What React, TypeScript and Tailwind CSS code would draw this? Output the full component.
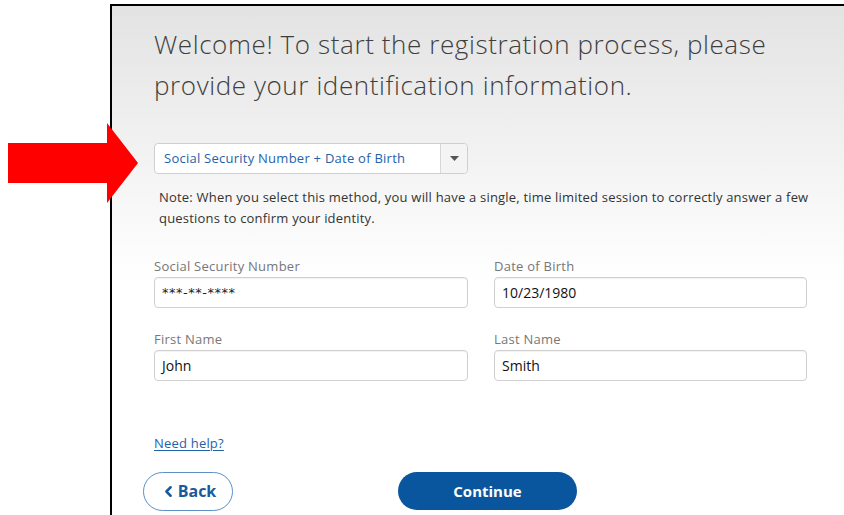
import React from 'react';
import { ChevronLeft } from 'lucide-react';

const Field = ({ label, value, mono }: { label: string; value: string; mono?: boolean }) => (
  <div className="flex flex-col">
    <label className="text-[13px] leading-[16px] tracking-[0.25px] text-[#777] mb-[3px]">{label}</label>
    <div className="h-[31px] rounded-[4px] border border-[#d0d0d0] bg-white shadow-[inset_0_1px_1px_rgba(0,0,0,0.06)] flex items-center px-[7px]">
      <span
        className={
          mono
            ? "text-[13px] tracking-[0.5px] text-[#222] font-['DejaVu_Sans',sans-serif]"
            : "text-[14px] text-[#111]"
        }
      >
        {value}
      </span>
    </div>
  </div>
);

const App = () => {
  return (
    <div className="relative w-[844px] h-[515px] overflow-hidden bg-white font-['Open_Sans',sans-serif]">
      {/* pointer arrow */}
      <svg className="absolute left-[8px] top-[123px] z-10" width="131" height="81" viewBox="0 0 131 81">
        <polygon points="0,20 99,20 99,0 130,40 99,80 99,60 0,60" fill="#ff0000" />
      </svg>

      <div className="ml-[110px] mt-[4px] h-[520px] border-l-2 border-t-2 border-black bg-[linear-gradient(to_bottom,#e3e3e3,#ffffff_275px)] pl-[42px] pr-[20px] pt-[18px]">
        <h1 className="text-[26px] leading-[41px] font-light tracking-[0.6px] text-[#3e3e3e]">
          Welcome! To start the registration process, please
          <br />
          provide your identification information.
        </h1>

        <div className="mt-[37px] w-[314px] h-[31px] rounded-[4px] border border-[#cfcfcf] bg-white flex items-stretch">
          <div className="flex-1 flex items-center pl-[9px] text-[13px] tracking-[0.25px] text-[#1f62a8]">
            Social Security Number + Date of Birth
          </div>
          <div className="w-[27px] border-l border-[#d6d6d6] bg-[#f4f4f4] rounded-r-[4px] flex items-center justify-center">
            <svg width="9" height="5" viewBox="0 0 9 5">
              <polygon points="0,0 9,0 4.5,5" fill="#555" />
            </svg>
          </div>
        </div>

        <p className="mt-[13px] ml-[5px] text-[13px] leading-[21px] tracking-[0.2px] text-[#333]">
          Note: When you select this method, you will have a single, time limited session to correctly answer a few
          questions to confirm your identity.
        </p>

        <div className="mt-[29px] grid grid-cols-[314px_313px] gap-x-[26px] gap-y-[23px]">
          <Field label="Social Security Number" value="***-**-****" mono />
          <Field label="Date of Birth" value="10/23/1980" />
          <Field label="First Name" value="John" />
          <Field label="Last Name" value="Smith" />
        </div>

        <a href="#" className="mt-[53px] block w-fit text-[13px] tracking-[0.2px] text-[#1f62a8] underline underline-offset-2">
          Need help?
        </a>

        <div className="mt-[18px] flex items-center">
          <button className="-ml-[11px] w-[90px] h-[39px] rounded-full border border-[#5c8fc6] bg-white flex items-center justify-center gap-[1px] text-[16px] font-bold text-[#195a9d]">
            <ChevronLeft size={17} strokeWidth={3.5} />
            Back
          </button>
          <button className="ml-[165px] w-[179px] h-[38px] rounded-full bg-[#0a569e] text-white text-[15px] font-bold">
            Continue
          </button>
        </div>
      </div>
    </div>
  );
};

export default App;
